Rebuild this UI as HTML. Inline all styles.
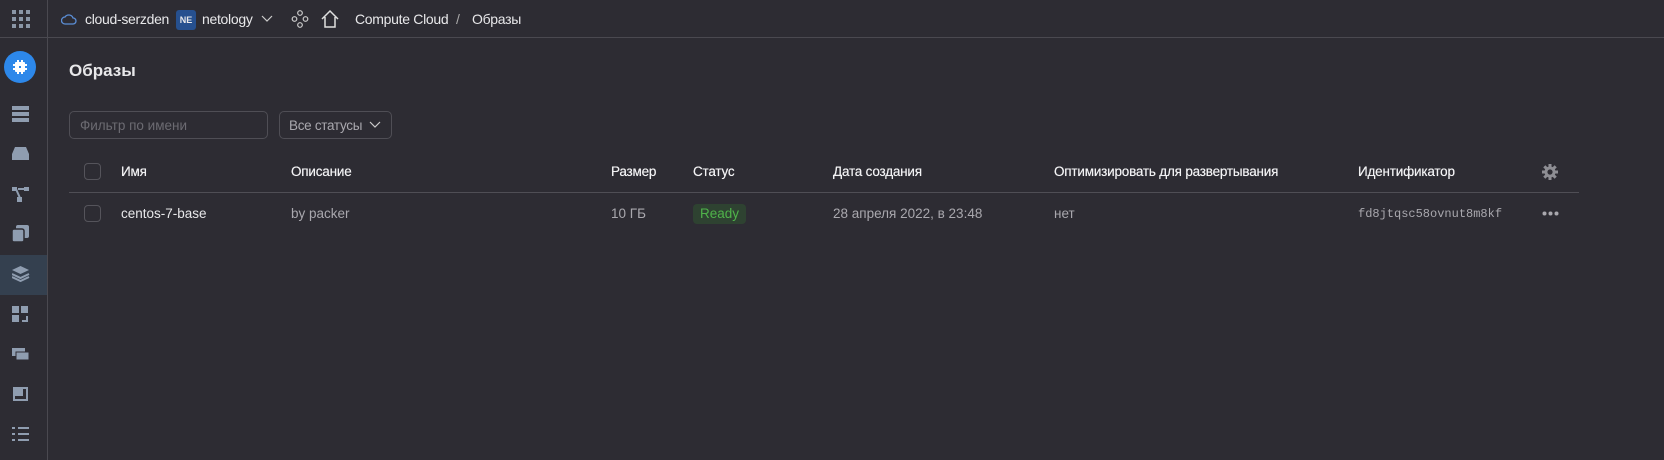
<!DOCTYPE html>
<html><head><meta charset="utf-8"><style>
*{box-sizing:border-box;margin:0;padding:0}
body{width:1664px;height:460px;background:#2d2c33;font-family:"Liberation Sans","Noto Sans CJK SC",sans-serif;color:#e8e8ea;font-size:14px;position:relative;overflow:hidden}
.a{position:absolute;white-space:nowrap}
.top{position:absolute;left:0;top:0;width:1664px;height:38px;border-bottom:1px solid #4a4950}
.tt{font-size:14px;letter-spacing:-0.3px;top:11px}
.side{position:absolute;left:47px;top:0;width:1px;height:460px;background:#4a4950}
.cb{position:absolute;left:84px;width:17px;height:17px;border:1px solid #55545b;border-radius:4px}
.h{color:#f2f2f4;font-size:13.5px;letter-spacing:-0.2px;text-shadow:0 0 0.4px #fff}
.g{color:#a9a8ae;font-size:13.5px}
</style></head><body>
<div class="top"></div>
<div class="side"></div>
<svg class="a" style="left:11px;top:9px" width="20" height="20" viewBox="0 0 20 20" fill="#8a96a6"><rect x="1" y="1" width="4" height="4"/><rect x="8" y="1" width="4" height="4"/><rect x="15" y="1" width="4" height="4"/><rect x="1" y="8" width="4" height="4"/><rect x="8" y="8" width="4" height="4"/><rect x="15" y="8" width="4" height="4"/><rect x="1" y="15" width="4" height="4"/><rect x="8" y="15" width="4" height="4"/><rect x="15" y="15" width="4" height="4"/></svg>
<svg class="a" style="left:61px;top:12px" width="16" height="14" viewBox="0 0 16 14"><path d="M4 12 H12 A3 3 0 0 0 12 6 A4.5 4.5 0 0 0 4 5 A3.5 3.5 0 0 0 4 12Z" fill="none" stroke="#5b8ed6" stroke-width="1.3"/></svg>
<div class="a tt" style="left:85px">cloud-serzden</div>
<div class="a" style="left:176px;top:10px;width:20px;height:20px;background:#26508f;border-radius:3px;font-size:9px;font-weight:bold;line-height:20px;text-align:center">NE</div>
<div class="a tt" style="left:202px">netology</div>
<svg class="a" style="left:261px;top:15px" width="12" height="8"><path d="M1 1 L6 6 L11 1" fill="none" stroke="#ccc" stroke-width="1.2"/></svg>
<svg class="a" style="left:291px;top:10px" width="18" height="18" viewBox="0 0 18 18" fill="none" stroke="#ccc" stroke-width="1.2"><circle cx="9" cy="3" r="2.3"/><circle cx="3.5" cy="9" r="2.3"/><circle cx="14.5" cy="9" r="2.3"/><circle cx="9" cy="15" r="2.3"/></svg>
<svg class="a" style="left:320px;top:9px" width="20" height="20" viewBox="0 0 20 20"><path d="M2 10 L10 2 L18 10 M5 8 V18 H15 V8" fill="none" stroke="#e0e0e0" stroke-width="1.5"/></svg>
<div class="a tt" style="left:355px">Compute Cloud</div>
<div class="a tt" style="left:456px;color:#aaa">/</div>
<div class="a tt" style="left:472px">Образы</div>
<div class="a" style="left:4px;top:51px;width:32px;height:32px;border-radius:50%;background:#2d88ea"></div>
<svg class="a" style="left:13px;top:60px" width="14" height="14" viewBox="0 0 14 14" fill="#fff"><rect x="2" y="2" width="10" height="10" rx="1"/><rect x="4.5" y="4.5" width="5" height="5" fill="#2d88ea"/><rect x="4" y="0" width="2" height="14"/><rect x="8" y="0" width="2" height="14"/><rect x="0" y="4" width="14" height="2"/><rect x="0" y="8" width="14" height="2"/></svg>
<div class="a" style="left:0;top:255px;width:47px;height:40px;background:#34404f"></div>
<svg class="a" style="left:12px;top:106px" width="18" height="16" fill="#8f9db0"><rect y="0" width="17" height="4"/><rect y="6" width="17" height="4"/><rect y="12" width="17" height="4"/></svg>
<svg class="a" style="left:12px;top:147px" width="18" height="14" fill="#8f9db0"><path d="M3 0 H14 L17 7 V13 H0 V7Z"/></svg>
<svg class="a" style="left:12px;top:187px" width="18" height="16" fill="#8f9db0"><rect x="0" y="0" width="5" height="4"/><rect x="12" y="0" width="5" height="4"/><rect x="5" y="10" width="5" height="5"/><path d="M4 2 L8 11 M6 2 H13" stroke="#8f9db0" stroke-width="2"/></svg>
<svg class="a" style="left:12px;top:225px" width="18" height="18" fill="#8f9db0"><rect x="4" y="0" width="13" height="13" rx="2"/><rect x="0" y="4" width="12" height="13" rx="2" stroke="#2d2c33" stroke-width="1.5"/></svg>
<svg class="a" style="left:12px;top:266px" width="18" height="16" fill="#8f9db0"><path d="M8.5 0 L17 4 L8.5 8 L0 4Z"/><path d="M0 8 L8.5 12 L17 8 M0 11 L8.5 15 L17 11" fill="none" stroke="#8f9db0" stroke-width="2"/></svg>
<svg class="a" style="left:12px;top:306px" width="18" height="16" fill="#8f9db0"><rect x="0" y="0" width="7" height="7"/><rect x="9" y="0" width="7" height="7"/><rect x="0" y="9" width="7" height="7"/><path d="M10 15 H15 V10" fill="none" stroke="#8f9db0" stroke-width="2"/></svg>
<svg class="a" style="left:12px;top:346px" width="18" height="16" fill="#8f9db0"><rect x="0" y="2" width="13" height="8"/><rect x="4" y="6" width="13" height="8" stroke="#2d2c33"/></svg>
<svg class="a" style="left:12px;top:386px" width="18" height="16" fill="none" stroke="#8f9db0" stroke-width="2"><rect x="2" y="2" width="13" height="12"/><rect x="4" y="4" width="6" height="5" fill="#8f9db0"/></svg>
<svg class="a" style="left:12px;top:426px" width="18" height="16" fill="#8f9db0"><rect x="6" y="1" width="11" height="2"/><rect x="6" y="7" width="11" height="2"/><rect x="6" y="13" width="11" height="2"/><rect x="0" y="1" width="3" height="2"/><rect x="0" y="7" width="3" height="2"/><rect x="0" y="13" width="3" height="2"/></svg>
<div class="a" style="left:69px;top:61px;font-size:17px;font-weight:bold">Образы</div>
<div class="a" style="left:69px;top:111px;width:199px;height:28px;border:1px solid #4f4e55;border-radius:5px;color:#6c6b72;padding:6px 10px;font-size:13.5px">Фильтр по имени</div>
<div class="a" style="left:279px;top:111px;width:113px;height:28px;border:1px solid #4f4e55;border-radius:5px;color:#a9a8ae;padding:6px 9px;font-size:13.5px;letter-spacing:-0.3px">Все статусы</div>
<svg class="a" style="left:369px;top:121px" width="12" height="8"><path d="M1 1 L6 6 L11 1" fill="none" stroke="#ccc" stroke-width="1.2"/></svg>
<div class="cb" style="top:163px"></div>
<div class="a h" style="left:121px;top:164px">Имя</div>
<div class="a h" style="left:291px;top:164px">Описание</div>
<div class="a h" style="left:611px;top:164px">Размер</div>
<div class="a h" style="left:693px;top:164px">Статус</div>
<div class="a h" style="left:833px;top:164px">Дата создания</div>
<div class="a h" style="left:1054px;top:164px">Оптимизировать для развертывания</div>
<div class="a h" style="left:1358px;top:164px">Идентификатор</div>
<svg class="a" style="left:1541px;top:163px" width="18" height="18" viewBox="0 0 18 18"><g stroke="#8e8e94" stroke-width="3"><path d="M9 1V17M1 9H17M3.3 3.3L14.7 14.7M14.7 3.3L3.3 14.7"/></g><circle cx="9" cy="9" r="5.5" fill="#8e8e94"/><circle cx="9" cy="9" r="2.6" fill="#2d2c33"/></svg>
<div class="a" style="left:69px;top:192px;width:1510px;height:1px;background:#4f4e55"></div>
<div class="cb" style="top:205px"></div>
<div class="a" style="left:121px;top:206px;font-size:13.5px">centos-7-base</div>
<div class="a g" style="left:291px;top:206px">by packer</div>
<div class="a g" style="left:611px;top:206px">10 ГБ</div>
<div class="a" style="left:693px;top:204px;width:53px;height:20px;background:#2e4231;border-radius:4px;color:#4fb34a;text-align:center;line-height:20px;font-size:13.5px">Ready</div>
<div class="a g" style="left:833px;top:206px">28 апреля 2022, в 23:48</div>
<div class="a g" style="left:1054px;top:206px">нет</div>
<div class="a g" style="left:1358px;top:207px;font-family:'Liberation Mono',monospace;font-size:12px">fd8jtqsc58ovnut8m8kf</div>
<svg class="a" style="left:1542px;top:211px" width="17" height="5" fill="#a9a8ae"><circle cx="2.5" cy="2.5" r="2"/><circle cx="8.5" cy="2.5" r="2"/><circle cx="14.5" cy="2.5" r="2"/></svg>
</body></html>
